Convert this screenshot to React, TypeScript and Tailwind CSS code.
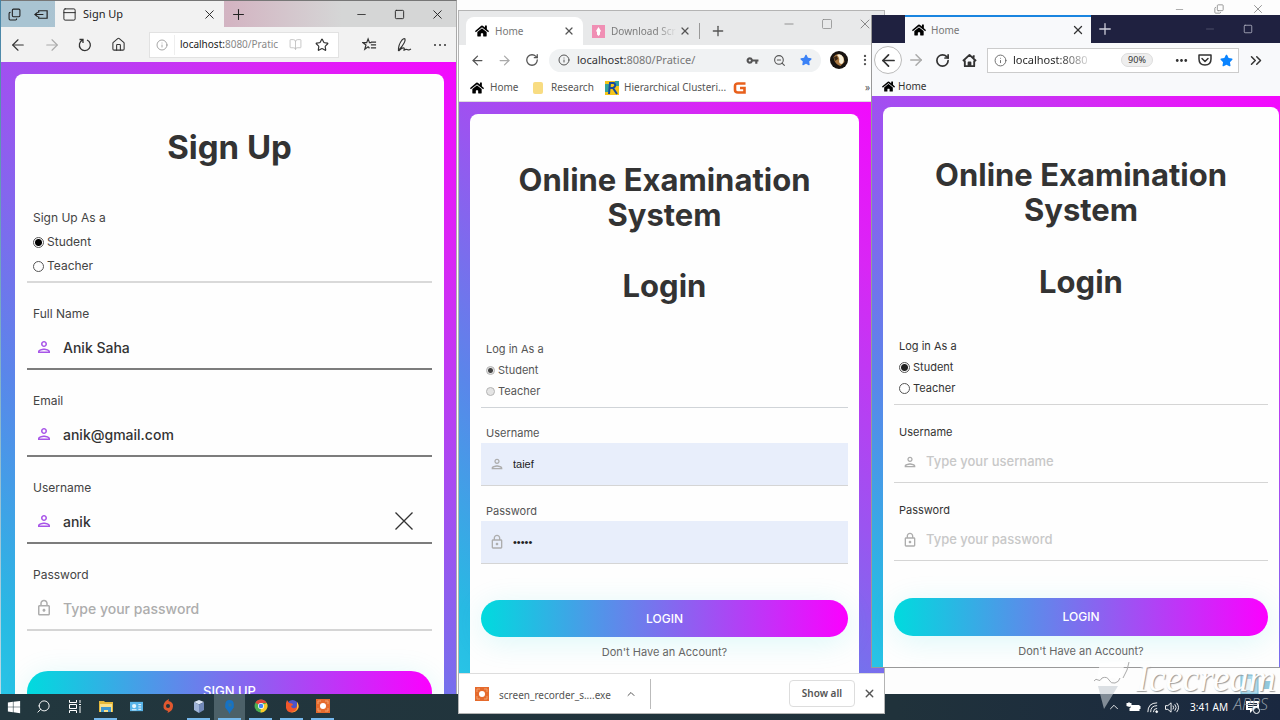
import type { ReactNode } from "react";
import {
  ArrowLeft, ArrowRight, BookOpen, ChevronUp, ChevronsRight, Copy, EllipsisVertical, Home, Info, Minus, Plus,
  RotateCw, Search, Square, Star, X, ZoomOut, PanelTop,
} from "lucide-react";
import { FaHome, FaStar, FaWindows } from "react-icons/fa";
import { MdOutlineLock, MdOutlinePerson, MdVpnKey, MdMoreHoriz } from "react-icons/md";

const PAGE_BG =
  "bg-[linear-gradient(45deg,#28c4e6_0%,#28bae3_7%,#5a86ea_30%,#9a55f0_55%,#d926f5_82%,#f408fe_100%)]";

function IconButton({ label, className, children }: { label: string; className: string; children: ReactNode }) {
  return (
    <button type="button" aria-label={label} className={`flex shrink-0 items-center justify-center ${className}`}>
      {children}
    </button>
  );
}

type Sizes = {
  radioText: string;
  radioBox: string;
  radio: string;
  group: string;
  label: string;
  field: string;
  input: string;
  icon: string;
};

const edgeSizes: Sizes = {
  radioText: "text-[12px] leading-6 text-[#444]",
  radioBox: "border-b-2 border-[#d9d9d9] px-[6px] pb-[3px]",
  radio: "size-[11px] border-[#555] checked:bg-[radial-gradient(circle,#000_0_3px,transparent_4px)]",
  group: "mt-[19px]",
  label: "px-[6px] text-[12px] leading-6 text-[#444]",
  field: "h-[44px] border-b-2 pr-4 pl-2",
  input: "pl-[10px] text-[14px] text-[#333] placeholder:text-[#adadad]",
  icon: "size-[18px]",
};

const chromeSizes: Sizes = {
  radioText: "text-[11px] leading-[21px] text-[#555]",
  radioBox: "border-b border-[#d0d4d8] px-[5px] pb-[5px]",
  radio: "size-[9px] border-[#b5b5b5] bg-[#e4e4e4] checked:bg-[radial-gradient(circle,#444_0_2px,#e4e4e4_3px)]",
  group: "mt-[15px]",
  label: "px-[5px] text-[11px] leading-5 text-[#555]",
  field: "h-[43px] border-b bg-[#e8eefb] pr-4 pl-2",
  input: "pl-2 text-[11px] text-[#222] placeholder:text-[#bbb]",
  icon: "size-4",
};

const firefoxSizes: Sizes = {
  radioText: "text-[11px] leading-[21px] text-[#333]",
  radioBox: "border-b border-[#d5d5d5] px-[5px] pb-[5px]",
  radio: "size-[11px] border-[#555] checked:bg-[radial-gradient(circle,#222_0_3px,transparent_4px)]",
  group: "mt-[17px]",
  label: "px-[5px] text-[11px] leading-5 text-[#333]",
  field: "h-[41px] border-b pr-4 pl-2",
  input: "pl-2 text-[13px] text-[#333] placeholder:text-[#c8c8c8]",
  icon: "size-4",
};

function RoleChoice({ id, legend, s }: { id: string; legend: string; s: Sizes }) {
  return (
    <fieldset className={s.radioBox}>
      <legend className={s.radioText}>{legend}</legend>
      {["Student", "Teacher"].map((role) => (
        <label key={role} className={`flex items-center gap-[3px] ${s.radioText}`}>
          <input
            type="radio"
            name={`${id}-role`}
            defaultChecked={role === "Student"}
            className={`appearance-none rounded-full border ${s.radio}`}
          />
          {role}
        </label>
      ))}
    </fieldset>
  );
}

function Field({
  id, label, type = "text", value, placeholder, s, active = false, plain = false, children,
}: {
  id: string; label: string; type?: string; value?: string; placeholder?: string;
  s: Sizes; active?: boolean; plain?: boolean; children?: ReactNode;
}) {
  const Icon = type === "password" ? MdOutlineLock : MdOutlinePerson;
  return (
    <div className={s.group}>
      <label htmlFor={id} className={`block ${s.label}`}>{label}</label>
      <div className={`flex items-center ${s.field} ${active ? "border-[#7c7c7c]" : "border-[#d5d5d5]"}`}>
        <Icon className={`shrink-0 ${s.icon} ${active ? "text-[#a855e8]" : "text-[#adadad]"}`} />
        <input
          id={id}
          type={type}
          defaultValue={value}
          placeholder={placeholder}
          className={`min-w-0 flex-1 bg-transparent outline-none ${s.input} ${plain ? "font-['Liberation_Sans',sans-serif]" : "font-medium"}`}
        />
        {children}
      </div>
    </div>
  );
}

function SubmitButton({ className, children }: { className: string; children: ReactNode }) {
  return (
    <button
      type="button"
      className={`block w-full rounded-full bg-[linear-gradient(to_right,#00dbde,#fc00ff)] font-medium text-white shadow-[0_5px_30px_rgba(3,216,222,0.14)] ${className}`}
    >
      {children}
    </button>
  );
}

function LoginForm({ id, s, filled, head, second, form, button }: {
  id: string; s: Sizes; filled: boolean; head: string; second: string; form: string; button: string;
}) {
  return (
    <form className={`px-[11px] font-[Inter,sans-serif] ${head}`}>
      <h1 className="text-center text-[31px] leading-[35px] font-bold text-[#333]">
        Online Examination
        <br />
        System
      </h1>
      <h2 className={`text-center text-[31px] leading-[35px] font-bold text-[#333] ${second}`}>Login</h2>
      <div className={form}>
        <RoleChoice id={id} legend="Log in As a" s={s} />
        <Field id={`${id}-user`} label="Username" s={s} plain={filled} value={filled ? "taief" : undefined} placeholder="Type your username" />
        <Field id={`${id}-pass`} label="Password" type="password" s={s} plain={filled} value={filled ? "taief" : undefined} placeholder="Type your password" />
      </div>
      <SubmitButton className={button}>LOGIN</SubmitButton>
      <a href="#signup" className="mt-[5px] block text-center text-[11px] leading-5 text-[#666]">
        Don't Have an Account?
      </a>
    </form>
  );
}

function EdgeWindow() {
  return (
    <section aria-label="Sign Up" className="absolute top-0 bottom-[26px] left-px flex w-[456px] flex-col border-t border-r border-t-[#777] border-r-[#aaa] bg-[#f2f2f2] font-['Noto_Sans',sans-serif] text-[10px]">
      <div className="flex h-[26px] shrink-0 bg-[linear-gradient(to_right,#a9c4d2_0%,#a9c4d2_10%,#d3b4c2_50%,#d5d6d6_75%)] text-[#222]">
        <div className="flex w-[54px] items-center justify-around">
          <IconButton label="Tabs set aside" className="size-4"><Copy size={13} className="-scale-y-100" /></IconButton>
          <IconButton label="Set tabs aside" className="size-4">
            <svg viewBox="0 0 16 16" className="size-[15px]" fill="none" stroke="currentColor" strokeWidth="1.300">
              <path d="M5 6V4h9v8H5v-2M1 8h9M4 5.500 1 8l3 2.500" />
            </svg>
          </IconButton>
        </div>
        <div className="flex w-[169px] items-center bg-[#f2f2f2] pr-[7px] pl-[7px]">
          <PanelTop size={15} strokeWidth={1.500} />
          <span className="ml-[6px] flex-1 text-[11px]">Sign Up</span>
          <IconButton label="Close tab" className="size-4"><X size={15} strokeWidth={1.500} /></IconButton>
        </div>
        <IconButton label="New tab" className="w-7"><Plus size={17} strokeWidth={1.500} /></IconButton>
        <div className="flex flex-1 items-center justify-end">
          <IconButton label="Minimize" className="w-[38px]"><Minus size={13} strokeWidth={1.500} /></IconButton>
          <IconButton label="Maximize" className="w-[38px]"><Square size={11} strokeWidth={2} /></IconButton>
          <IconButton label="Close" className="w-[38px]"><X size={15} strokeWidth={1.500} /></IconButton>
        </div>
      </div>
      <div className="flex h-[35px] shrink-0 items-center text-[#333]">
        <IconButton label="Back" className="w-[34px]"><ArrowLeft size={18} strokeWidth={1.500} /></IconButton>
        <IconButton label="Forward" className="w-[33px] text-[#aaa]"><ArrowRight size={18} strokeWidth={1.500} /></IconButton>
        <IconButton label="Refresh" className="w-[34px]">
          <svg viewBox="0 0 14 14" className="size-[14px]" fill="none" stroke="currentColor" strokeWidth="1.300">
            <path d="M9 2A5.500 5.500 0 1 1 4.500 2.100M1.500 1.500h3.500V5" />
          </svg>
        </IconButton>
        <IconButton label="Home page" className="w-[32px]"><Home size={15} strokeWidth={1.700} /></IconButton>
        <div className="ml-[15px] flex h-[26px] w-[190px] items-center border border-[#e2e2e2] bg-white pr-[9px]">
          <span className="flex h-5 w-[25px] items-center justify-center border-r border-[#eee] text-[#888]"><Info size={12} strokeWidth={1.500} /></span>
          <span className="ml-[5px] flex-1 whitespace-nowrap text-[#888]"><span className="text-[#222]">localhost:</span>8080/Pratic</span>
          <BookOpen size={13} strokeWidth={1.500} className="mr-[13px] shrink-0 text-[#bbb]" />
          <Star size={14} strokeWidth={2} className="shrink-0" />
        </div>
        <div className="flex flex-1 items-center justify-between pr-[6px] pl-[22px]">
          <IconButton label="Favorites" className="size-4">
            <svg viewBox="0 0 16 16" className="size-[15px]" fill="none" stroke="currentColor" strokeWidth="1.300">
              <path d="M10 6 8 6 6.500 2 5 6H1l3.200 2.500L3 13l3.500-2.500L8 12M9.500 5.500H15M9.500 8.500H15M9.500 11.500H15" />
            </svg>
          </IconButton>
          <IconButton label="Add notes" className="size-4">
            <svg viewBox="0 0 16 16" className="size-4" fill="none" stroke="currentColor" strokeWidth="1.200">
              <path d="M2.500 14Q2 8 6 3q2-2 3-1 1 3-6 11M2.500 14q4-4 5.500-3 1 1-.5 2.500 2-1.500 3.500-1t2 .5l2-1" />
            </svg>
          </IconButton>
          <IconButton label="More" className="size-5">
            <svg viewBox="0 0 14 4" className="w-[14px]" fill="currentColor"><circle cx="2" cy="2" r="1" /><circle cx="7" cy="2" r="1" /><circle cx="12" cy="2" r="1" /></svg>
          </IconButton>
        </div>
      </div>
      <div className={`min-h-0 flex-1 overflow-hidden pt-3 pr-3 pl-[14px] ${PAGE_BG}`}>
        <form className="min-h-full rounded-t-lg bg-[#fefefe] px-3 pt-[53px] font-[Inter,sans-serif]">
          <h1 className="text-center text-[33px] leading-10 font-bold text-[#333]">Sign Up</h1>
          <div className="mt-[39px]">
            <RoleChoice id="edge" legend="Sign Up As a" s={edgeSizes} />
            <Field id="edge-name" label="Full Name" value="Anik Saha" s={edgeSizes} active />
            <Field id="edge-email" label="Email" value="anik@gmail.com" s={edgeSizes} active />
            <Field id="edge-user" label="Username" value="anik" s={edgeSizes} active>
              <IconButton label="Clear" className="size-6 text-[#333]">
                <svg viewBox="0 0 18 18" className="size-[18px]" fill="none" stroke="currentColor" strokeWidth="1.300"><path d="M.5.5l17 17M17.500.5l-17 17" /></svg>
              </IconButton>
            </Field>
            <Field id="edge-pass" label="Password" type="password" placeholder="Type your password" s={edgeSizes} />
          </div>
          <SubmitButton className="mt-10 h-[42px] text-[13px]">SIGN UP</SubmitButton>
        </form>
      </div>
    </section>
  );
}

function RecorderIcon({ className }: { className: string }) {
  return (
    <svg viewBox="0 0 14 14" className={className}>
      <path fill="#e56a2c" d="M0 0h14v14H0z" />
      <path d="M2 5V2h3M9 2h3v3M12 9v3H9M5 12H2V9" stroke="#f0a06f" fill="none" />
      <circle cx="7" cy="7" r="3" fill="#fff" />
    </svg>
  );
}

function ChromeWindow() {
  return (
    <section aria-label="Home, Chrome" className="absolute top-[10px] bottom-[6px] left-[458px] flex w-[427px] flex-col border border-[#b4b4b4] bg-white font-['Noto_Sans',sans-serif] text-[10px] text-[#555]">
      <div className="flex h-[34px] shrink-0 items-end bg-[#e8e9ea] pl-[7px]">
        <div className="flex h-[28px] w-[117px] items-center rounded-t-lg bg-white pr-[6px] pl-[9px]">
          <FaHome size={14} className="text-black" />
          <span className="ml-[6px] flex-1 text-[#777]">Home</span>
          <IconButton label="Close tab" className="size-4"><X size={12} strokeWidth={2.500} /></IconButton>
        </div>
        <div className="flex h-[28px] w-[116px] items-center pr-[6px] pl-[9px]">
          <svg viewBox="0 0 13 13" className="size-[13px] shrink-0">
            <path fill="#f08fb4" d="M0 0h13v13H0z" />
            <path fill="#fff" d="m6.500 2 2.500 4-1 1v2.500L6.500 11 5 9.500V7L4 6z" />
          </svg>
          <span className="ml-[6px] flex-1 bg-linear-to-r from-[#777] from-70% to-transparent bg-clip-text whitespace-nowrap text-transparent">Download Scr</span>
          <IconButton label="Close tab" className="size-4"><X size={12} strokeWidth={2.500} /></IconButton>
        </div>
        <div className="mb-[6px] h-4 w-px bg-[#999]" />
        <IconButton label="New tab" className="h-7 w-[36px]"><Plus size={16} strokeWidth={2} /></IconButton>
        <div className="flex flex-1 items-center justify-end self-start pt-[5px] text-[#888]">
          <IconButton label="Minimize" className="w-[38px]"><Minus size={14} strokeWidth={1.500} /></IconButton>
          <IconButton label="Maximize" className="w-[38px]"><Square size={12} strokeWidth={1.500} /></IconButton>
          <IconButton label="Close" className="w-[38px]"><X size={16} strokeWidth={1.500} /></IconButton>
        </div>
      </div>
      <div className="flex h-[30px] shrink-0 items-center">
        <IconButton label="Back" className="ml-1 w-[28px]"><ArrowLeft size={15} strokeWidth={2} /></IconButton>
        <IconButton label="Forward" className="w-[27px] text-[#aaa]"><ArrowRight size={15} strokeWidth={2} /></IconButton>
        <IconButton label="Reload" className="w-[27px]"><RotateCw size={14} strokeWidth={2.200} /></IconButton>
        <div className="ml-1 flex h-[23px] w-[272px] items-center rounded-full bg-[#f0f2f3] pr-[9px] pl-[9px]">
          <Info size={12} className="shrink-0" />
          <span className="ml-[7px] flex-1 text-[11px] text-[#777]"><span className="text-[#333]">localhost:</span>8080/Pratice/</span>
          <div className="flex items-center gap-[14px]">
            <MdVpnKey size={13} />
            <ZoomOut size={13} />
            <FaStar size={12} className="text-[#3b82f6]" />
          </div>
        </div>
        <svg viewBox="0 0 18 18" className="ml-[9px] size-[18px]">
          <circle cx="9" cy="9" r="9" fill="#17120f" />
          <path fill="#a8763f" d="M3.500 6q2-3 5-3l5 3 1 5-4 4q-4-1-6-5z" />
          <path fill="#f7edd5" d="M7 4q4-2 6 2t-1 7q-3 0-3-3 1-3-2-6z" />
          <path fill="#3b2716" d="m4 6 3-1 1 3-3 2z" />
        </svg>
        <IconButton label="Menu" className="ml-[9px] size-4"><EllipsisVertical size={14} /></IconButton>
      </div>
      <div className="flex h-[27px] shrink-0 items-center border-b border-[#ddd] pr-[14px] pb-px pl-[11px] whitespace-nowrap">
        <a href="#home" className="flex w-[62px] items-center gap-[6px]"><FaHome size={14} className="text-black" />Home</a>
        <a href="#research" className="flex w-[73px] items-center gap-2"><span className="ml-px h-3 w-[10px] rounded-xs bg-[#f8dc82]" />Research</a>
        <a href="#clustering" className="flex w-[128px] items-center gap-[5px]">
          <svg viewBox="0 0 14 14" className="size-[14px] shrink-0">
            <path fill="#f5c518" d="M0 0h14v14H0z" />
            <path fill="#35a49b" d="M0 3h5v8H0zM10 0h4v5h-4z" />
            <path stroke="#174b9c" strokeWidth="2" fill="none" d="M4 13 5 2h4q3 3-1 5H4.500M8 7l4 6" />
          </svg>
          Hierarchical Clusteri...
        </a>
        <a href="#g" aria-label="G" className="flex">
          <svg viewBox="0 0 14 14" className="size-[14px]">
            <path d="M12.500 2.500H5Q2 2.500 2 5v4q0 2.500 3 2.500h6.500V7H7" fill="none" stroke="#e8601c" strokeWidth="2.600" />
          </svg>
        </a>
        <span className="ml-auto">»</span>
      </div>
      <div className={`min-h-0 flex-1 overflow-hidden pt-[12px] pr-[25px] pl-[11px] ${PAGE_BG}`}>
        <div className="min-h-full rounded-t-lg bg-[#fefefe]">
          <LoginForm id="chrome" s={chromeSizes} filled head="pt-12" second="mt-9" form="mt-9" button="mt-9 h-[37px] text-[12px]" />
        </div>
      </div>
      <div className="flex h-[40px] shrink-0 items-center border-t border-[#ddd] pr-[7px] pl-4">
        <RecorderIcon className="size-[14px]" />
        <span className="ml-[10px] w-[112px] pt-1">screen_recorder_s....exe</span>
        <IconButton label="Download options" className="ml-[12px] size-4"><ChevronUp size={12} /></IconButton>
        <div className="ml-[11px] h-[30px] w-px bg-[#bbb]" />
        <button type="button" className="ml-auto h-[27px] w-[66px] rounded border border-[#ddd] font-semibold">Show all</button>
        <IconButton label="Close downloads" className="ml-[6px] size-4"><X size={13} strokeWidth={2.500} /></IconButton>
      </div>
    </section>
  );
}

function FirefoxWindow() {
  return (
    <section aria-label="Home, Firefox" className="absolute top-[15px] right-0 bottom-[52px] left-[871px] flex flex-col overflow-hidden border-b border-l border-[#999] bg-[#f8f9fb] font-['Noto_Sans',sans-serif] text-[10px] text-[#333]">
      <div className="flex h-[28px] shrink-0 items-center bg-[#1f2140] pl-[33px] text-[#d0d0dc]">
        <div className="flex h-full w-[186px] items-center border-t-2 border-[#1a85e0] bg-[#f8f9fb] pr-[5px] pl-[7px] text-[#333]">
          <FaHome size={14} className="text-black" />
          <span className="ml-[5px] flex-1 text-[#777]">Home</span>
          <IconButton label="Close tab" className="size-4"><X size={14} strokeWidth={2.200} /></IconButton>
        </div>
        <IconButton label="New tab" className="w-7"><Plus size={18} strokeWidth={1.700} /></IconButton>
        <div className="ml-auto flex pr-[13px]">
          <IconButton label="Minimize" className="w-[38px] text-[#5c5e76]"><Minus size={12} strokeWidth={1.500} /></IconButton>
          <IconButton label="Maximize" className="w-[38px] text-[#b0b1c0]"><Square size={10} strokeWidth={2} /></IconButton>
        </div>
      </div>
      <div className="flex h-[34px] shrink-0 items-center pr-[15px] pl-[2px]">
        <IconButton label="Back" className="size-[28px] rounded-full border border-[#bbb] bg-white"><ArrowLeft size={19} strokeWidth={2.200} /></IconButton>
        <IconButton label="Forward" className="w-[27px] text-[#aaa]"><ArrowRight size={18} strokeWidth={2} /></IconButton>
        <IconButton label="Reload" className="w-[27px]"><RotateCw size={15} strokeWidth={2.700} /></IconButton>
        <IconButton label="Home page" className="w-[27px]">
          <svg viewBox="0 0 16 16" className="size-[15px]" fill="none" stroke="currentColor" strokeWidth="2" strokeLinejoin="round">
            <path d="M1 8.500 8 2l7 6.500M3 8v6h10V8M7 14v-4h2v4M12.500 5V2.500" />
          </svg>
        </IconButton>
        <div className="ml-1 flex h-[25px] flex-1 items-center border border-[#ccc] bg-white pr-[5px] pl-[6px]">
          <Info size={13} strokeWidth={1.700} className="shrink-0 text-[#666]" />
          <span className="ml-[6px] bg-linear-to-r from-[#222] from-60% to-[#ddd] bg-clip-text text-[11px] whitespace-nowrap text-transparent">localhost:8080</span>
          <span className="ml-auto flex h-[14px] w-[32px] items-center justify-center rounded-full border border-[#ddd] bg-[#eee] text-[9px]">90%</span>
          <div className="ml-[20px] flex items-center gap-[8px]">
            <MdMoreHoriz size={17} />
            <svg viewBox="0 0 14 14" className="size-[14px]" fill="none" stroke="currentColor" strokeWidth="1.500" strokeLinecap="round" strokeLinejoin="round">
              <path d="M1 2h12v4q0 6-6 6T1 6zM4 5.500l3 3 3-3" />
            </svg>
            <FaStar size={13} className="text-[#0a84ff]" />
          </div>
        </div>
        <IconButton label="More tools" className="ml-[8px] size-[18px]"><ChevronsRight size={19} strokeWidth={2} /></IconButton>
      </div>
      <div className="flex h-[19px] shrink-0 items-center pb-px pl-[10px]">
        <a href="#home" className="flex items-center gap-[3px]"><FaHome size={13} className="text-black" />Home</a>
      </div>
      <div className={`min-h-0 flex-1 overflow-hidden pt-[11px] pr-px pl-[11px] ${PAGE_BG}`}>
        <div className="min-h-full rounded-t-lg bg-[#fefefe]">
          <LoginForm id="firefox" s={firefoxSizes} filled={false} head="pt-[50px]" second="mt-[37px]" form="mt-[37px]" button="mt-[37px] h-[38px] text-[12px]" />
        </div>
      </div>
    </section>
  );
}

const apps: { name: string; open?: boolean; active?: boolean; icon: ReactNode }[] = [
  { name: "Search", icon: <Search size={15} strokeWidth={1.500} className="-scale-x-100" /> },
  {
    name: "Task View",
    icon: (
      <svg viewBox="0 0 14 14" className="size-[14px]" fill="none" stroke="currentColor">
        <path d="M1.500 1v2.500h7V1M1.500 5.500h7v4h-7zM1.500 14v-2.500h7V14M12 1v3M12 7v7M11 5.500h2" />
      </svg>
    ),
  },
  {
    name: "File Explorer", open: true,
    icon: (
      <svg viewBox="0 0 14 14" className="size-[14px]">
        <path fill="#e5b83b" d="M0 2h5l1 1h8v10H0z" /><path fill="#fbe08a" d="M1 5h12v8H1z" />
        <path fill="#3f97cf" d="M2 8h10v5H9v-2H5v2H2z" />
      </svg>
    ),
  },
  {
    name: "Control Panel",
    icon: (
      <svg viewBox="0 0 14 12" className="size-[13px]">
        <path fill="#58b4e8" d="M0 1h14v10H0z" /><circle cx="4.500" cy="5.500" r="2.300" fill="#e3f4fc" />
        <path stroke="#fff" fill="none" d="M2 9.500h5M9 4h3M9 6.500h3M9 9h3" />
      </svg>
    ),
  },
  {
    name: "Origin",
    icon: (
      <svg viewBox="0 0 14 14" className="size-[14px]">
        <path fill="#e0582f" d="M8 0 7.500 2q5 1 4.500 5.500T6.500 14l.5-2Q2 11 2.500 6.500T8 0z" /><circle cx="7" cy="7" r="2" fill="#22343c" />
      </svg>
    ),
  },
  {
    name: "VirtualBox", open: true,
    icon: (
      <svg viewBox="0 0 14 14" className="size-[14px]">
        <path fill="#dbe5f5" d="m7 1 5 2-5 2.500L2 3z" /><path fill="#9fb4d8" d="m2 3 5 2.500V14l-5-3z" /><path fill="#7189b8" d="m12 3-5 2.500V14l5-3z" />
      </svg>
    ),
  },
  {
    name: "Edge", open: true, active: true,
    icon: (
      <svg viewBox="0 0 14 14" className="size-[15px]">
        <path fill="#1672c4" d="M3 6q0-5 4-5t4 4v3l-3 4-1 2-1-2-3-4z" /><path fill="#35749a" d="M6 4h3v3H6z" />
      </svg>
    ),
  },
  {
    name: "Chrome", open: true,
    icon: (
      <svg viewBox="0 0 14 14" className="size-[14px]">
        <circle cx="7" cy="7" r="6.500" fill="#4caf50" />
        <path fill="#e0453a" d="M7 7 1.400 3.800A6.500 6.500 0 0 1 12.700 4H7z" />
        <path fill="#fbc928" d="M7 7l5.700-3A6.500 6.500 0 0 1 6.500 13.500z" />
        <circle cx="7" cy="7" r="3" fill="#fff" /><circle cx="7" cy="7" r="2.300" fill="#4285f4" />
      </svg>
    ),
  },
  {
    name: "Firefox", open: true,
    icon: (
      <svg viewBox="0 0 14 14" className="size-[14px]">
        <circle cx="7.500" cy="6.500" r="5.500" fill="#4b54c8" />
        <path fill="#f2572b" d="M1 4l1-3 2 3q4 0 4 2L6 7q1 3 4 2t2-6q3 4 1 7-3 4-7 3.500T1 9z" />
        <path fill="#fdc43a" d="M12 3q3 4 0 8-3 3-6 2 5 0 6-4z" />
      </svg>
    ),
  },
  { name: "Screen Recorder", open: true, icon: <RecorderIcon className="size-[14px]" /> },
];

function Taskbar() {
  return (
    <nav aria-label="Taskbar" className="absolute inset-x-0 bottom-0 flex h-[26px] items-stretch bg-linear-to-r from-[#22373e] via-[#20323b] via-70% to-[#1a2840] font-['Noto_Sans',sans-serif] text-white">
      <IconButton label="Start" className="w-7"><FaWindows size={14} /></IconButton>
      {apps.map((app) => (
        <div key={app.name} className={`flex w-[31px] flex-col ${app.active ? "bg-[#4c6169]" : ""}`}>
          <IconButton label={app.name} className="flex-1">{app.icon}</IconButton>
          <div className={`mx-1 h-[2px] ${app.open ? "bg-[#76b9ed]" : ""}`} />
        </div>
      ))}
      <div className="ml-auto flex items-center gap-[5px] pr-5 text-[11px]">
        <ChevronUp size={14} strokeWidth={1.500} />
        <svg viewBox="0 0 14 10" className="h-[10px] w-[15px]" fill="currentColor"><path d="M4 3h9v1h1v3h-1v2H3V6h1zM0 1h2V0h1v1h2v2L3 5 0 4z" /></svg>
        <svg viewBox="0 0 14 14" className="size-[13px]" fill="none" stroke="currentColor">
          <path d="M2 12Q2 2 12 2M5 12q0-7 7-7M8 12q0-4 4-4" /><circle cx="11.500" cy="11.500" r="1" fill="currentColor" />
        </svg>
        <svg viewBox="0 0 16 14" className="h-[13px] w-[16px]" fill="none" stroke="currentColor"><path d="M1 5h2.500L7 2v10L3.500 9H1zM9 5q1.500 2 0 4M11 3.500q3 3.500 0 7M13 2q4 5 0 10" /></svg>
        <time className="ml-[5px] text-[10px]">3:41 AM</time>
        <svg viewBox="0 0 14 14" className="ml-[13px] size-[14px]"><path fill="#fff" d="M0 1h13v9H7l-3 3v-3H0z" /><path stroke="#1c2b3e" d="M2 3.500h9M2 5.500h9M2 7.500h5" /><circle cx="10.500" cy="10.500" r="3" fill="#1c2b3e" stroke="#fff" /></svg>
      </div>
    </nav>
  );
}

function Watermark() {
  return (
    <div className="pointer-events-none absolute right-1 bottom-[9px] flex items-start gap-1">
      <svg viewBox="0 0 40 52" className="h-[52px] w-[40px]">
        <path fill="#ffffffb0" d="M8 4 33 2 31 12q-2 8-6 10-4-6-8-1t-7 0-6 2z" />
        <path d="M2 22q2-3 4-1t4-2q5-2 7 2t6 3 5-5M31 19q5-8 6-16" fill="none" stroke="#aaa" />
        <path fill="#c5ccd299" d="M6 27h20L12 50z" />
      </svg>
      <div className="flex flex-col items-end">
        <span className="font-['Liberation_Serif',serif] text-[38px] leading-[38px] text-[#fefefe] italic [text-shadow:1px_1px_1px_#999]">Icecream</span>
        <span className="pr-2 font-['Open_Sans',sans-serif] text-[16px] leading-[14px] font-light text-[#97a0a9] italic">APPS</span>
      </div>
    </div>
  );
}

export default function App() {
  return (
    <main className="relative h-screen min-h-[400px] overflow-hidden bg-[#fdfdfd]">
      <div className="absolute top-0 left-0 h-full w-px bg-linear-to-b from-[#4684a5] to-[#bcdde9]" />
      <div className="absolute top-0 right-[3px] flex h-[18px] text-[#888]">
        <IconButton label="Minimize" className="w-[39px]"><Minus size={11} strokeWidth={1.500} /></IconButton>
        <IconButton label="Restore" className="w-[39px]"><Copy size={10} strokeWidth={2} className="-scale-y-100" /></IconButton>
        <IconButton label="Close" className="w-[39px]"><X size={14} strokeWidth={1.500} /></IconButton>
      </div>
      <svg viewBox="0 0 36 22" className="absolute right-1 bottom-[26px] h-[22px] w-9">
        <path fill="#add9eb" stroke="#75bad4" d="M1 3h17v19H1z" /><path fill="#e9f6fb" d="M5 7h6v11H5z" />
        <path fill="#91c9dd" d="M23 9h10v8H23z" />
      </svg>
      <Taskbar />
      <EdgeWindow />
      <ChromeWindow />
      <FirefoxWindow />
      <Watermark />
    </main>
  );
}
